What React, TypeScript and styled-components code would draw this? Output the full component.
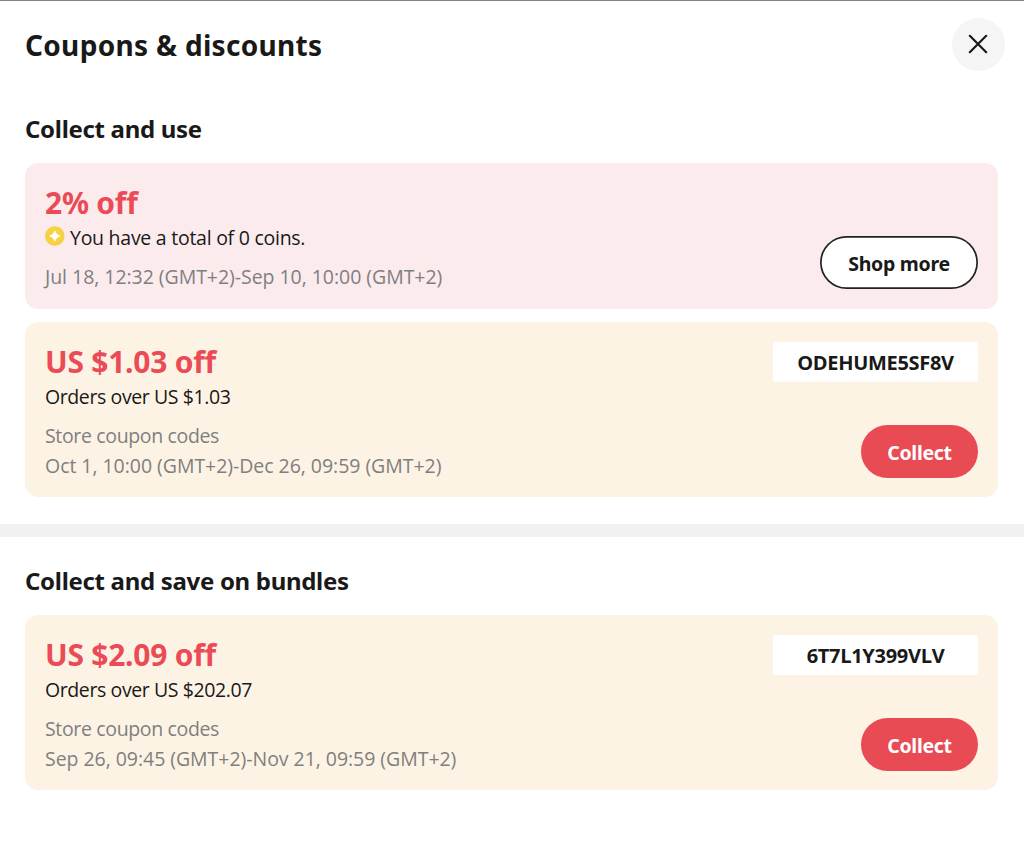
import React from "react";
import styled, { createGlobalStyle } from "styled-components";

const GlobalStyle = createGlobalStyle`
  * {
    box-sizing: border-box;
  }

  body {
    margin: 0;
    background: #fff;
    color: #191919;
    font-family: "Open Sans", "Noto Sans", sans-serif;
  }
`;

const Dialog = styled.main`
  height: 847px;
  overflow: hidden;
  border-top: 1px solid #838383;
`;

const Header = styled.header`
  display: flex;
  justify-content: space-between;
  height: 112px;
  padding: 16px 19px 0 25px;
`;

const Title = styled.h1`
  margin: 8px 0 0;
  font: 700 28px/40px "Noto Sans", sans-serif;
  letter-spacing: 0.32px;
`;

const CloseButton = styled.button`
  display: flex;
  align-items: center;
  justify-content: center;
  width: 53px;
  height: 53px;
  margin-top: 1px;
  padding: 0 1px 2px 0;
  border: 0;
  border-radius: 50%;
  background: #f5f5f5;
`;

const Section = styled.section`
  padding: 0 26px 0 25px;
`;

const SectionTitle = styled.h2`
  height: 32px;
  margin: 0 0 18px;
  font: 700 24px/32px "Noto Sans", sans-serif;
  letter-spacing: -0.31px;
`;

const Coupon = styled.article<{ $tone: "pink" | "cream" }>`
  display: flex;
  justify-content: space-between;
  height: ${({ $tone }) => ($tone === "pink" ? 146 : 175)}px;
  margin-bottom: 13px;
  padding: ${({ $tone }) => ($tone === "pink" ? "20px" : "20px 20px 19px")};
  border-radius: 13px;
  background: ${({ $tone }) => ($tone === "pink" ? "#fcebed" : "#fdf3e4")};
`;

const Details = styled.div`
  white-space: nowrap;
`;

const Amount = styled.h3`
  margin: 0;
  color: #eb4b56;
  font: 700 30px/40px "Noto Sans", sans-serif;
  letter-spacing: -0.25px;
`;

const Condition = styled.p<{ $tracking: number }>`
  display: flex;
  align-items: center;
  gap: 5px;
  height: 29px;
  margin: 0 0 10px;
  font-size: 19.5px;
  letter-spacing: ${({ $tracking }) => $tracking}px;

  svg {
    margin-bottom: 3px;
  }
`;

const Meta = styled.p<{ $tracking?: number }>`
  margin: 0;
  color: #7f7f7f;
  font-size: 19.5px;
  line-height: 30px;
  letter-spacing: ${({ $tracking = -0.04 }) => $tracking}px;
`;

const Actions = styled.div`
  display: flex;
  flex-direction: column;
  align-items: flex-end;
  justify-content: space-between;
`;

const Code = styled.div`
  display: flex;
  align-items: center;
  justify-content: center;
  width: 205px;
  height: 40px;
  padding-top: 1px;
  border-radius: 2px;
  background: #fff;
  font-size: 20px;
  font-weight: 700;
  letter-spacing: -0.3px;
`;

const ActionButton = styled.button<{ $outlined?: boolean }>`
  width: ${({ $outlined }) => ($outlined ? 158 : 117)}px;
  height: 53px;
  margin-top: auto;
  padding: 2px 0 0;
  border: 0;
  border-radius: 27px;
  background: ${({ $outlined }) => ($outlined ? "#fff" : "#e94b54")};
  box-shadow: ${({ $outlined }) => ($outlined ? "inset 0 0 0 1.7px #222" : "none")};
  color: ${({ $outlined }) => ($outlined ? "#191919" : "#fff")};
  font: 700 19.5px "Noto Sans", sans-serif;
  letter-spacing: -0.28px;
`;

const Divider = styled.div`
  height: 13px;
  margin: 27px 0 28px;
  background: #f1f1f1;
`;

const CoinIcon = () => (
  <svg width="20" height="20" viewBox="0 0 20 20">
    <circle cx="9.8" cy="10" r="9.8" fill="#f6d142" />
    <path
      d="M9.8 4.8Q10.8 9 15 10Q10.8 11 9.8 15.2Q8.8 11 4.6 10Q8.8 9 9.8 4.8Z"
      fill="#fff"
      stroke="#fff"
      strokeWidth="0.8"
      strokeLinejoin="round"
    />
  </svg>
);

interface StoreCouponProps {
  amount: string;
  condition: string;
  date: string;
  code: string;
}

const StoreCoupon = ({ amount, condition, date, code }: StoreCouponProps) => (
  <Coupon $tone="cream">
    <Details>
      <Amount>{amount}</Amount>
      <Condition $tracking={-0.4}>{condition}</Condition>
      <Meta $tracking={-0.35}>Store coupon codes</Meta>
      <Meta>{date}</Meta>
    </Details>
    <Actions>
      <Code>{code}</Code>
      <ActionButton>Collect</ActionButton>
    </Actions>
  </Coupon>
);

const App: React.FC = () => (
  <>
    <GlobalStyle />
    <Dialog>
      <Header>
        <Title>Coupons &amp; discounts</Title>
        <CloseButton aria-label="Close">
          <svg
            width="20"
            height="20"
            viewBox="0 0 20 20"
            fill="none"
            stroke="#191919"
            strokeWidth="2.2"
            strokeLinecap="round"
          >
            <path d="m1.8 1.8 16.4 16.4M18.2 1.8 1.8 18.2" />
          </svg>
        </CloseButton>
      </Header>
      <Section>
        <SectionTitle>Collect and use</SectionTitle>
        <Coupon $tone="pink">
          <Details>
            <Amount>2% off</Amount>
            <Condition $tracking={-0.26}>
              <CoinIcon />
              You have a total of 0 coins.
            </Condition>
            <Meta>Jul 18, 12:32 (GMT+2)-Sep 10, 10:00 (GMT+2)</Meta>
          </Details>
          <Actions>
            <ActionButton $outlined>Shop more</ActionButton>
          </Actions>
        </Coupon>
        <StoreCoupon
          amount="US $1.03 off"
          condition="Orders over US $1.03"
          date="Oct 1, 10:00 (GMT+2)-Dec 26, 09:59 (GMT+2)"
          code="ODEHUME5SF8V"
        />
      </Section>
      <Divider />
      <Section>
        <SectionTitle>Collect and save on bundles</SectionTitle>
        <StoreCoupon
          amount="US $2.09 off"
          condition="Orders over US $202.07"
          date="Sep 26, 09:45 (GMT+2)-Nov 21, 09:59 (GMT+2)"
          code="6T7L1Y399VLV"
        />
      </Section>
    </Dialog>
  </>
);

export default App;
